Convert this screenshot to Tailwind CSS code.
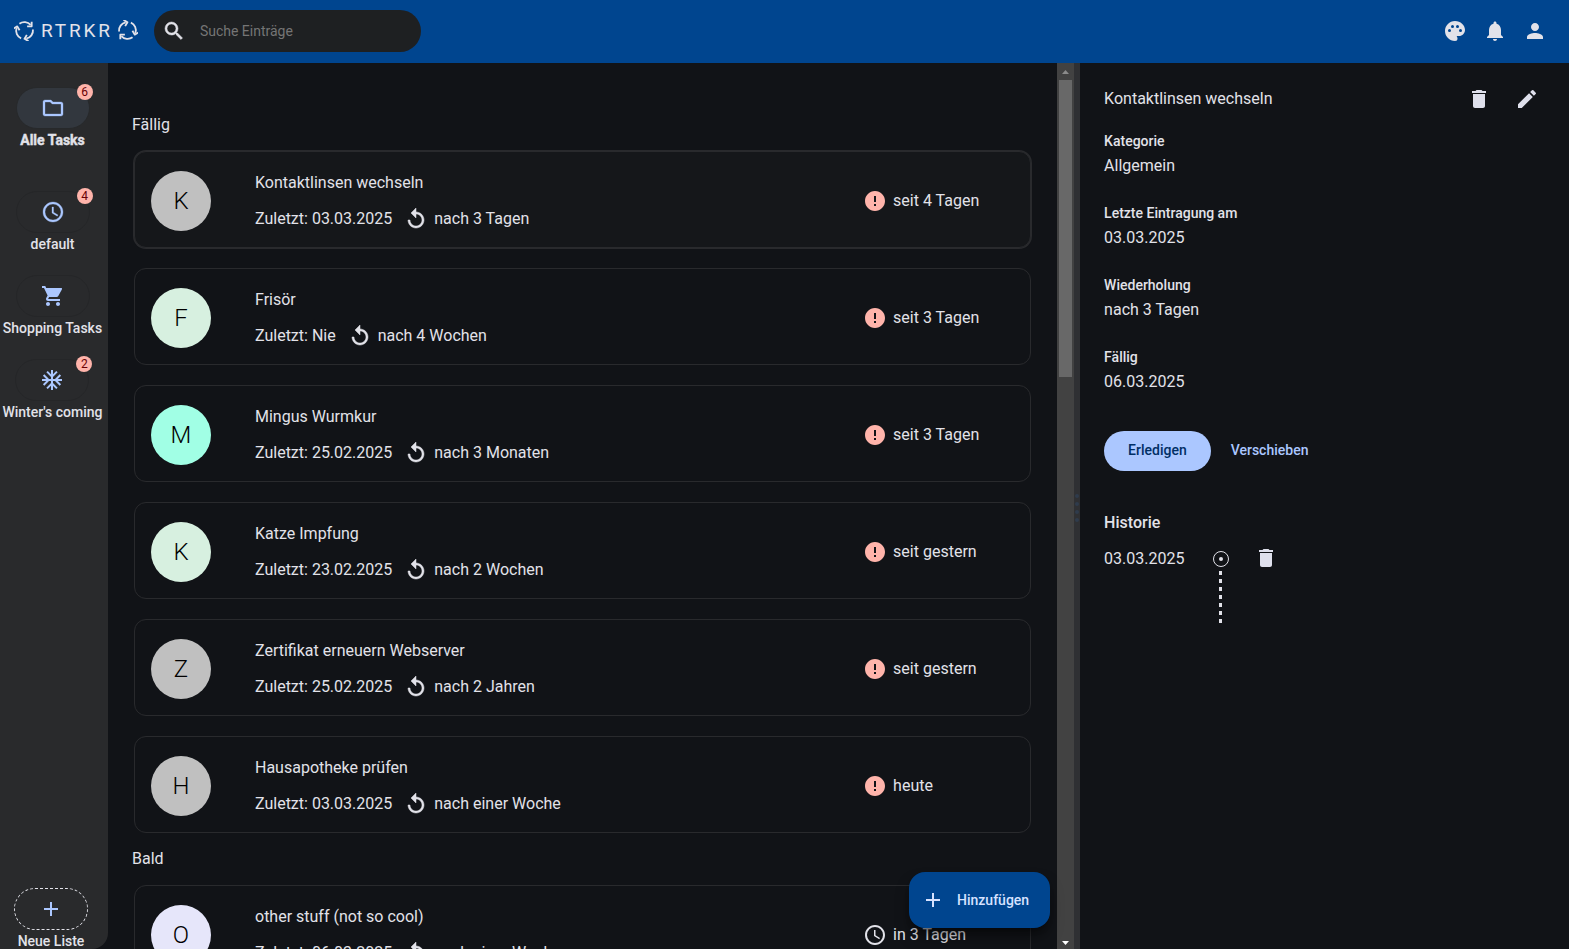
<!DOCTYPE html>
<html lang="de">
<head>
<meta charset="utf-8">
<title>RTRKR</title>
<script src="https://cdn.jsdelivr.net/npm/@tailwindcss/browser@4"></script>
</head>
<body class="flex h-screen flex-col overflow-hidden bg-[#111317] font-[Roboto,sans-serif] text-base leading-6 text-[#e2e2e9]">
<svg class="hidden" xmlns="http://www.w3.org/2000/svg">
  <symbol id="i-cycle" viewBox="0 0 24 24"><g fill="none" stroke="currentColor" stroke-width="2.100" stroke-linejoin="round"><g id="arrow"><path d="M6.200 4.200A9.500 9.500 0 0 1 19 5.600"/><path d="M20.200 2V7.200H15"/></g><use href="#arrow" transform="rotate(120 12 12)"/><use href="#arrow" transform="rotate(240 12 12)"/></g></symbol>
  <symbol id="i-search" viewBox="0 0 24 24"><path d="M15.5 14h-.79l-.28-.27A6.47 6.47 0 0 0 16 9.5 6.5 6.5 0 1 0 9.5 16c1.61 0 3.09-.59 4.23-1.57l.27.28v.79l5 4.99L20.49 19l-4.99-5zm-6 0a4.5 4.5 0 1 1 0-9 4.5 4.5 0 0 1 0 9z"/></symbol>
  <symbol id="i-palette" viewBox="0 0 24 24"><path d="M12 2C6.49 2 2 6.49 2 12s4.49 10 10 10a2.5 2.5 0 0 0 2.5-2.5c0-.61-.23-1.2-.64-1.67a.53.53 0 0 1-.13-.33c0-.28.22-.5.5-.5H16c3.31 0 6-2.69 6-6 0-4.96-4.49-9-10-9zm-5.500 11a1.5 1.500 0 1 1 0-3 1.500 1.500 0 0 1 0 3zm3-4a1.500 1.500 0 1 1 0-3 1.500 1.500 0 0 1 0 3zm5 0a1.500 1.500 0 1 1 0-3 1.500 1.500 0 0 1 0 3zm3 4a1.500 1.500 0 1 1 0-3 1.500 1.500 0 0 1 0 3z"/></symbol>
  <symbol id="i-bell" viewBox="0 0 24 24"><path d="M12 22c1.100 0 2-.9 2-2h-4c0 1.100.89 2 2 2zm6-6v-5c0-3.070-1.640-5.640-4.500-6.320V4c0-.83-.67-1.500-1.500-1.500s-1.500.67-1.500 1.500v.68C7.630 5.360 6 7.920 6 11v5l-2 2v1h16v-1l-2-2z"/></symbol>
  <symbol id="i-person" viewBox="0 0 24 24"><path d="M12 12c2.210 0 4-1.790 4-4s-1.790-4-4-4-4 1.790-4 4 1.790 4 4 4zm0 2c-2.670 0-8 1.340-8 4v2h16v-2c0-2.660-5.330-4-8-4z"/></symbol>
  <symbol id="i-trash" viewBox="0 0 24 24"><path d="M6 19c0 1.100.9 2 2 2h8c1.100 0 2-.9 2-2V7H6v12zM19 4h-3.500l-1-1h-5l-1 1H5v2h14V4z"/></symbol>
  <symbol id="i-pencil" viewBox="0 0 24 24"><path d="M3 17.250V21h3.750L17.810 9.940l-3.750-3.750L3 17.250zM20.710 7.040a1 1 0 0 0 0-1.410l-2.340-2.340a1 1 0 0 0-1.410 0l-1.830 1.830 3.750 3.750 1.830-1.830z"/></symbol>
  <symbol id="i-folder" viewBox="0 0 24 24"><path d="M9.170 6l2 2H20v10H4V6h5.170M10 4H4c-1.100 0-1.990.9-1.990 2L2 18c0 1.100.9 2 2 2h16c1.100 0 2-.9 2-2V8c0-1.100-.9-2-2-2h-8l-2-2z"/></symbol>
  <symbol id="i-clock" viewBox="0 0 24 24"><path d="M11.990 2C6.470 2 2 6.480 2 12s4.470 10 9.990 10C17.520 22 22 17.520 22 12S17.520 2 11.990 2zM12 20a8 8 0 1 1 0-16 8 8 0 0 1 0 16zm.5-13H11v6l5.250 3.150.75-1.230-4.500-2.670z"/></symbol>
  <symbol id="i-cart" viewBox="0 0 24 24"><path d="M7 18c-1.100 0-1.990.9-1.990 2S5.900 22 7 22s2-.9 2-2-.9-2-2-2zM1 2v2h2l3.600 7.590-1.350 2.450c-.16.28-.25.61-.25.96 0 1.100.9 2 2 2h12v-2H7.420c-.14 0-.25-.11-.25-.25l.03-.12.9-1.630h7.450c.75 0 1.410-.41 1.750-1.030l3.580-6.490A1 1 0 0 0 20 4H5.210l-.94-2H1zm16 16c-1.100 0-1.990.9-1.990 2s.89 2 1.990 2 2-.9 2-2-.9-2-2-2z"/></symbol>
  <symbol id="i-snow" viewBox="0 0 24 24"><path d="M22 11h-4.170l3.240-3.240-1.410-1.420L15 11h-2V9l4.660-4.660-1.420-1.410L13 6.170V2h-2v4.170L7.760 2.930 6.340 4.340 11 9v2H9L4.340 6.340 2.930 7.760 6.170 11H2v2h4.170l-3.240 3.240 1.410 1.420L9 13h2v2l-4.660 4.660 1.420 1.410L11 17.830V22h2v-4.170l3.240 3.240 1.420-1.410L13 15v-2h2l4.660 4.660 1.410-1.420L17.830 13H22z"/></symbol>
  <symbol id="i-plus" viewBox="0 0 24 24"><path d="M19 13h-6v6h-2v-6H5v-2h6V5h2v6h6v2z"/></symbol>
  <symbol id="i-replay" viewBox="0 0 24 24"><path d="M12 5V1L7 6l5 5V7c3.310 0 6 2.690 6 6s-2.690 6-6 6-6-2.690-6-6H4c0 4.420 3.580 8 8 8s8-3.580 8-8-3.580-8-8-8z"/></symbol>
  <symbol id="i-alert" viewBox="0 0 24 24"><path d="M12 2C6.480 2 2 6.480 2 12s4.480 10 10 10 10-4.480 10-10S17.520 2 12 2zm1 15h-2v-2h2v2zm0-4h-2V7h2v6z"/></symbol>
</svg>

<header class="flex h-[63px] shrink-0 items-center bg-[#00458f] pr-[22px] pb-0.5 pl-[14px]">
  <a href="#" class="flex items-center text-[19px] tracking-[0.15em]" aria-label="RTRKR">
    <svg class="mr-1.5 size-[21px]"><use href="#i-cycle"/></svg>
    <span>RTRKR</span>
    <svg class="ml-1 size-[21px] rotate-180"><use href="#i-cycle"/></svg>
  </a>
  <label class="ml-4 flex h-[42px] w-[267px] items-center rounded-full bg-[#1e2022] pl-2">
    <svg class="size-6 fill-current stroke-current stroke-[0.5]"><use href="#i-search"/></svg>
    <input type="search" aria-label="Suche" placeholder="Suche Einträge" class="ml-3.5 w-52 bg-transparent text-sm outline-none placeholder:text-[#757575]">
  </label>
  <nav class="ml-auto flex gap-4">
    <button aria-label="Design"><svg class="size-6 fill-current"><use href="#i-palette"/></svg></button>
    <button aria-label="Benachrichtigungen"><svg class="size-6 fill-current"><use href="#i-bell"/></svg></button>
    <button aria-label="Profil"><svg class="size-6 fill-current"><use href="#i-person"/></svg></button>
  </nav>
</header>

<div class="flex min-h-0 flex-1">
  <nav class="flex w-[108px] shrink-0 flex-col items-center rounded-br-2xl bg-[#292a2c] pt-6 pr-[3px] text-sm font-medium whitespace-nowrap">
    <a href="#" class="mb-10 flex flex-col items-center font-bold">
      <span class="relative flex h-[42px] w-[74px] items-center justify-center rounded-full border border-[#27292b] bg-[#32373e] text-[#abc7ff]"><svg class="size-6 fill-current stroke-current stroke-[0.3]"><use href="#i-folder"/></svg><span class="absolute -top-1 -right-1 size-4 rounded-full bg-[#ffb4ab] text-center text-xs leading-4 font-normal text-[#690005]">6</span></span>
      <span class="leading-[22px] [-webkit-text-stroke:0.4px]">Alle Tasks</span>
    </a>
    <a href="#" class="mb-5 flex flex-col items-center">
      <span class="relative flex h-[42px] w-[74px] items-center justify-center rounded-full border border-[#252628] text-[#abc7ff]"><svg class="size-6 fill-current stroke-current stroke-[0.3]"><use href="#i-clock"/></svg><span class="absolute -top-1 -right-1 size-4 rounded-full bg-[#ffb4ab] text-center text-xs leading-4 font-normal text-[#690005]">4</span></span>
      <span class="leading-[22px]">default</span>
    </a>
    <a href="#" class="mb-5 flex flex-col items-center">
      <span class="flex h-[42px] w-[74px] items-center justify-center rounded-full border border-[#252628] text-[#abc7ff]"><svg class="size-6 fill-current"><use href="#i-cart"/></svg></span>
      <span class="leading-[22px]">Shopping Tasks</span>
    </a>
    <a href="#" class="flex flex-col items-center">
      <span class="relative flex h-[42px] w-[74px] items-center justify-center rounded-full border border-[#252628] text-[#abc7ff]"><svg class="size-6 fill-current"><use href="#i-snow"/></svg><span class="absolute -top-1 -right-1 size-4 rounded-full bg-[#ffb4ab] text-center text-xs leading-4 font-normal text-[#690005]">2</span></span>
      <span class="leading-[22px]">Winter's coming</span>
    </a>
    <button class="mt-auto mr-[3px] flex flex-col items-center">
      <span class="flex h-[42px] w-[74px] items-center justify-center rounded-full border border-dashed border-[#e2e2e9] text-[#abc7ff]"><svg class="size-6 fill-current"><use href="#i-plus"/></svg></span>
      <span class="h-[19px] leading-[22px]">Neue Liste</span>
    </button>
  </nav>

  <div class="relative flex min-w-0 flex-1">
    <main class="min-w-0 flex-1 overflow-hidden pt-9 pr-[26px] pl-6">
      <h2 class="h-[52px] leading-[52px]">Fällig</h2>
      <ul id="due" class="ml-0.5 flex flex-col gap-5"></ul>
      <h2 class="h-[52px] leading-[52px]">Bald</h2>
      <ul id="soon" class="ml-0.5 flex flex-col gap-5"></ul>
    </main>
    <div class="flex w-[17px] shrink-0 flex-col items-center bg-[#424242]" aria-hidden="true">
      <svg class="h-[17px] w-[17px] shrink-0 fill-[#8b8b8b]" viewBox="0 0 17 17"><path d="M5 11h7L8.500 7z"/></svg>
      <div class="h-[33.5%] w-[13px] bg-[#686868]"></div>
      <svg class="mt-auto h-[17px] w-[17px] shrink-0 fill-white" viewBox="0 0 17 17"><path d="M5 9h7L8.500 13z"/></svg>
    </div>
    <button class="absolute right-6 bottom-[21px] flex h-14 items-center gap-3 rounded-2xl bg-[#00458f] pr-[21px] pl-3 text-sm font-medium text-[#d7e2ff] shadow-lg shadow-black/50"><svg class="size-6 fill-current"><use href="#i-plus"/></svg>Hinzufügen</button>
  </div>

  <div class="flex w-1.5 shrink-0 flex-col items-center justify-center gap-1 bg-[#2f3033] pt-1" role="separator">
    <i class="size-1 rounded-full bg-[#2f3b4c]"></i><i class="size-1 rounded-full bg-[#2f3b4c]"></i><i class="size-1 rounded-full bg-[#2f3b4c]"></i><i class="size-1 rounded-full bg-[#2f3b4c]"></i>
  </div>

  <aside class="w-[31.16%] shrink-0 pt-3 pr-[18px] pl-6">
    <div class="flex h-12 items-center">
      <h2 class="flex-1">Kontaktlinsen wechseln</h2>
      <button aria-label="Löschen" class="flex size-12 items-center justify-center"><svg class="size-6 fill-[#dfe0ec]"><use href="#i-trash"/></svg></button>
      <button aria-label="Bearbeiten" class="flex size-12 items-center justify-center"><svg class="size-6 fill-[#dfe0ec]"><use href="#i-pencil"/></svg></button>
    </div>
    <dl class="mt-1.5 flex flex-col gap-[22px]">
      <div><dt class="text-sm leading-6 font-medium">Kategorie</dt><dd class="leading-[26px]">Allgemein</dd></div>
      <div><dt class="text-sm leading-6 font-medium">Letzte Eintragung am</dt><dd class="leading-[26px]">03.03.2025</dd></div>
      <div><dt class="text-sm leading-6 font-medium">Wiederholung</dt><dd class="leading-[26px]">nach 3 Tagen</dd></div>
      <div><dt class="text-sm leading-6 font-medium">Fällig</dt><dd class="leading-[26px]">06.03.2025</dd></div>
    </dl>
    <div class="mt-9 flex gap-2 text-sm font-medium">
      <button class="h-10 rounded-full bg-[#abc7ff] px-6 pb-0.5 text-[#002f65]">Erledigen</button>
      <button class="h-10 px-3 pb-0.5 text-[#abc7ff]">Verschieben</button>
    </div>
    <h3 class="mt-10 font-medium">Historie</h3>
    <div class="mt-3 flex h-6 items-center">
      <time class="w-[109px]">03.03.2025</time>
      <svg class="size-4" viewBox="0 0 16 16"><circle cx="8" cy="8" r="7.500" fill="none" stroke="currentColor"/><circle cx="8" cy="8" r="2" fill="currentColor"/></svg>
      <button aria-label="Eintrag löschen" class="ml-[25px] pb-0.5"><svg class="size-6 fill-[#dfe0ec]"><use href="#i-trash"/></svg></button>
    </div>
    <svg class="ml-[115px] h-[52px] w-[3px]"><path d="M1.500 0V52" stroke="#e2e2e9" stroke-width="3" stroke-dasharray="4 4"/></svg>
  </aside>
</div>

<template id="card">
  <li class="flex h-[97px] items-center rounded-xl border border-[#292a2d] pt-[3px] pr-4 pl-4">
    <span data-k="letter" class="flex size-[60px] shrink-0 items-center justify-center rounded-full text-2xl font-light text-black"></span>
    <div class="ml-11 min-w-0 flex-1">
      <p data-k="title" class="leading-9"></p>
      <p class="flex items-center leading-9"><span data-k="last"></span><svg class="mr-1.5 ml-3 size-6 fill-current stroke-current stroke-[0.5]"><use href="#i-replay"/></svg><span data-k="every"></span></p>
    </div>
    <div class="flex w-[151px] items-center gap-1.5"><svg data-k="icon" class="size-6 fill-current"><use/></svg><span data-k="when"></span></div>
  </li>
</template>
<script>
const due = [
  ['K', '#c0c0c0', 'Kontaktlinsen wechseln', '03.03.2025', 'nach 3 Tagen', 'seit 4 Tagen'],
  ['F', '#d7f0e0', 'Frisör', 'Nie', 'nach 4 Wochen', 'seit 3 Tagen'],
  ['M', '#a1ffe5', 'Mingus Wurmkur', '25.02.2025', 'nach 3 Monaten', 'seit 3 Tagen'],
  ['K', '#d7f0e0', 'Katze Impfung', '23.02.2025', 'nach 2 Wochen', 'seit gestern'],
  ['Z', '#c0c0c0', 'Zertifikat erneuern Webserver', '25.02.2025', 'nach 2 Jahren', 'seit gestern'],
  ['H', '#c0c0c0', 'Hausapotheke prüfen', '03.03.2025', 'nach einer Woche', 'heute'],
];
const soon = [['O', '#e6e6fa', 'other stuff (not so cool)', '06.03.2025', 'nach einer Woche', 'in 3 Tagen']];
function fill(id, rows, overdue) {
  rows.forEach(([letter, color, title, last, every, when], i) => {
    const li = document.getElementById('card').content.cloneNode(true).firstElementChild;
    const part = k => li.querySelector(`[data-k=${k}]`);
    part('letter').textContent = letter;
    part('letter').style.background = color;
    part('title').textContent = title;
    part('last').textContent = 'Zuletzt: ' + last;
    part('every').textContent = every;
    part('when').textContent = when;
    part('icon').firstElementChild.setAttribute('href', overdue ? '#i-alert' : '#i-clock');
    if (overdue) part('icon').classList.add('text-[#ffb4ab]');
    if (overdue && i === 0) li.classList.add('bg-[#15171a]', 'ring-1', 'ring-[#292a2d]');
    document.getElementById(id).append(li);
  });
}
fill('due', due, true);
fill('soon', soon, false);
</script>
</body>
</html>
